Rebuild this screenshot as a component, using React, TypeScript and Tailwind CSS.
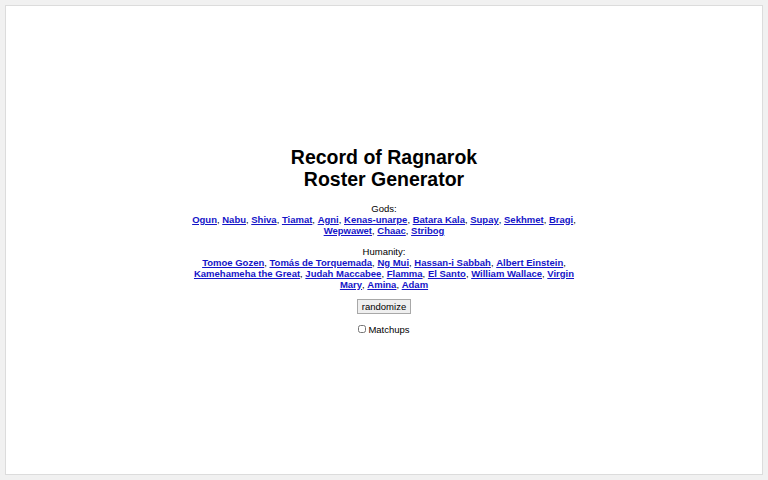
import React, { useState } from 'react';

const gods = ['Ogun', 'Nabu', 'Shiva', 'Tiamat', 'Agni', 'Kenas-unarpe', 'Batara Kala', 'Supay', 'Sekhmet', 'Bragi', 'Wepwawet', 'Chaac', 'Stribog'];

const humans = [
  'Tomoe Gozen',
  'Tomás de Torquemada',
  'Ng Mui',
  'Hassan-i Sabbah',
  'Albert Einstein',
  'Kamehameha the Great',
  'Judah Maccabee',
  'Flamma',
  'El Santo',
  'William Wallace',
  'Virgin Mary',
  'Amina',
  'Adam',
];

const NameList: React.FC<{ label: string; names: string[] }> = ({ label, names }) => (
  <div className="mt-[10px]">
    <div>{label}:</div>
    <div>
      {names.map((n, i) => (
        <React.Fragment key={n}>
          <a href="#" className="font-bold text-[#1414c8] underline">
            {n}
          </a>
          {i < names.length - 1 ? ', ' : ''}
        </React.Fragment>
      ))}
    </div>
  </div>
);

export default function App() {
  const [matchups, setMatchups] = useState(false);

  return (
    <div className="h-[480px] w-[768px] bg-[#f1f1f1] p-[5px]" style={{ fontFamily: '"Liberation Sans", Arial, sans-serif' }}>
      <div className="flex h-full flex-col items-center justify-center border border-[#dcdcdc] bg-white text-black">
        <div className="w-[394px] text-center text-[9.5px] leading-[11px]">
          <h1 className="mb-[13px] text-[19.5px] font-bold leading-[22px]">
            Record of Ragnarok
            <br />
            Roster Generator
          </h1>
          <NameList label="Gods" names={gods} />
          <NameList label="Humanity" names={humans} />
          <div className="mt-[9px]">
            <button className="border border-[#a8a8a8] bg-[#efefef] px-[4px] py-[1px] text-[9.5px] leading-[11px]">randomize</button>
          </div>
          <label className="mt-[10px] flex items-center justify-center gap-[2px]">
            <input type="checkbox" className="h-[8px] w-[8px]" checked={matchups} onChange={(e) => setMatchups(e.target.checked)} />
            Matchups
          </label>
        </div>
      </div>
    </div>
  );
}
